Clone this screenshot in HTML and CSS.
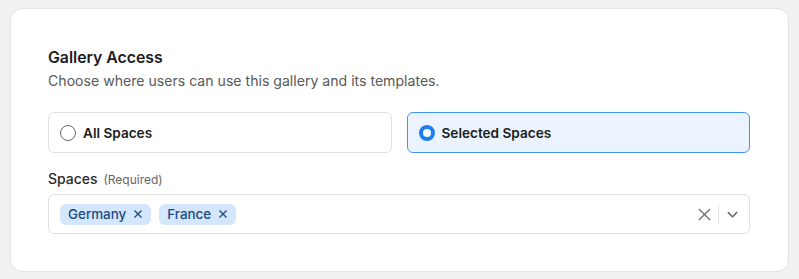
FILE: index.html
```html
<!DOCTYPE html>
<html lang="en">
<head>
<meta charset="utf-8">
<link rel="stylesheet" href="styles.css">
</head>
<body>
<div class="card">
  <h2 class="title">Gallery Access</h2>
  <p class="subtitle">Choose where users can use this gallery and its templates.</p>
  <div class="options">
    <label class="option">
      <span class="radio"></span>
      <span class="option-label">All Spaces</span>
    </label>
    <label class="option option-selected">
      <span class="radio radio-checked"></span>
      <span class="option-label">Selected Spaces</span>
    </label>
  </div>
  <div class="field-label">Spaces <span class="req">(Required)</span></div>
  <div class="select">
    <div class="chips">
      <span class="chip">Germany <svg class="chip-x" viewBox="0 0 10 10"><path d="M1.5 1.5 8.5 8.5M8.5 1.5 1.5 8.5"/></svg></span>
      <span class="chip">France <svg class="chip-x" viewBox="0 0 10 10"><path d="M1.5 1.5 8.5 8.5M8.5 1.5 1.5 8.5"/></svg></span>
    </div>
    <div class="controls">
      <svg class="clear" viewBox="0 0 14 14"><path d="M1 1 13 13M13 1 1 13"/></svg>
      <span class="sep"></span>
      <svg class="chev" viewBox="0 0 14 14"><path d="M2 4.5 7 9.5 12 4.5"/></svg>
    </div>
  </div>
</div>
</body>
</html>
```
FILE: styles.css
```css
* { box-sizing: border-box; }
html, body { margin: 0; }
body {
  background: #f1f1f1;
  font-family: Inter, "Noto Sans", sans-serif;
  color: #1a1a1a;
  padding: 8px 10px 8px 10px;
}
.card {
  width: 779px;
  height: 264px;
  background: #fff;
  border: 1px solid #e3e3e3;
  border-radius: 12px;
  padding: 37px 38px 37px 37px;
}
.title {
  margin: 0;
  font-size: 15.8px;
  line-height: 24px;
  font-weight: 600;
  color: #1c1c1c;
}
.subtitle {
  margin: 1px 0 0;
  font-size: 14.1px;
  line-height: 20px;
  color: #595959;
}
.options {
  display: grid;
  grid-template-columns: 1fr 1fr;
  gap: 15px;
  margin-top: 21px;
}
.option {
  display: flex;
  align-items: center;
  height: 41px;
  padding: 0 11px;
  border: 1px solid #e0e0e0;
  border-radius: 6px;
  gap: 7px;
}
.option-selected {
  background: #eaf3fe;
  border-color: #3f93f5;
}
.radio {
  width: 16px;
  height: 16px;
  border-radius: 50%;
  border: 1.5px solid #6b6b6b;
  flex: none;
  background: #fff;
}
.radio-checked {
  border: 4px solid #1c7ef0;
}
.option-label {
  font-size: 13.6px;
  font-weight: 600;
  color: #1c1c1c;
}
.field-label {
  margin-top: 16px;
  font-size: 14px;
  line-height: 20px;
  font-weight: 500;
  color: #2a2a2a;
}
.req {
  font-size: 12px;
  font-weight: 400;
  color: #666;
  margin-left: 2px;
}
.select {
  margin-top: 4px;
  height: 40px;
  border: 1px solid #e0e0e0;
  border-radius: 6px;
  display: flex;
  align-items: center;
  justify-content: space-between;
  padding: 0 10px 0 11px;
}
.chips {
  display: flex;
  gap: 8px;
}
.chip {
  display: inline-flex;
  align-items: center;
  gap: 7px;
  height: 21px;
  padding: 0 8px 0 8px;
  background: #d4e6fb;
  border-radius: 6px;
  font-size: 13.4px;
  font-weight: 500;
  color: #1b4a7f;
}
.chip-x {
  width: 10px;
  height: 10px;
  fill: none;
  stroke: #1b4a7f;
  stroke-width: 1.3;
}
.controls {
  display: flex;
  align-items: center;
  gap: 7px;
}
.clear {
  width: 13px;
  height: 13px;
  fill: none;
  stroke: #6f6f6f;
  stroke-width: 1.4;
}
.sep {
  width: 1px;
  height: 19px;
  background: #e0e0e0;
}
.chev {
  width: 13px;
  height: 13px;
  fill: none;
  stroke: #6f6f6f;
  stroke-width: 1.7;
}
```
